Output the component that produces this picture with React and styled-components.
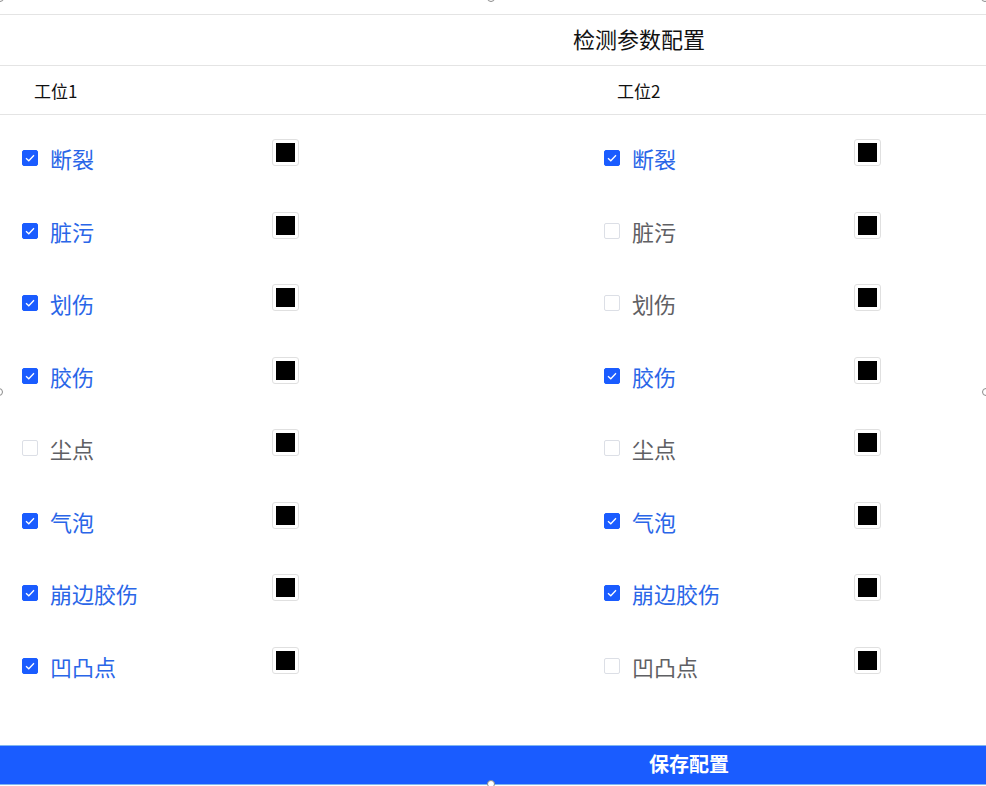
import React, { useState } from "react";
import styled, { createGlobalStyle } from "styled-components";

const GlobalStyle = createGlobalStyle`
  html, body {
    margin: 0;
    padding: 0;
    background: #ffffff;
    font-family: "Noto Sans CJK SC", "Noto Sans", sans-serif;
  }
`;

const DEFECTS = ["断裂", "脏污", "划伤", "胶伤", "尘点", "气泡", "崩边胶伤", "凹凸点"];

const INITIAL = {
  station1: [true, true, true, true, false, true, true, true],
  station2: [true, false, false, true, false, true, true, false],
};

function App() {
  const [checks, setChecks] = useState(INITIAL);

  const toggle = (station, index) => {
    setChecks((prev) => ({
      ...prev,
      [station]: prev[station].map((v, i) => (i === index ? !v : v)),
    }));
  };

  return (
    <Page>
      <GlobalStyle />
      <TopSpace />
      <TitleBar>检测参数配置</TitleBar>
      <StationBar>
        <StationName>工位1</StationName>
        <StationName>工位2</StationName>
      </StationBar>
      <DefectGrid>
        {["station1", "station2"].map((station) => (
          <Column key={station}>
            {DEFECTS.map((name, i) => (
              <DefectRow key={name}>
                <CheckLabel onClick={() => toggle(station, i)}>
                  <CheckBox $checked={checks[station][i]}>
                    {checks[station][i] && (
                      <svg width="10" height="8" viewBox="0 0 10 8">
                        <path
                          d="M1 4.2 L3.8 6.8 L9 1.2"
                          fill="none"
                          stroke="#ffffff"
                          strokeWidth="1.3"
                        />
                      </svg>
                    )}
                  </CheckBox>
                  <DefectName $checked={checks[station][i]}>{name}</DefectName>
                </CheckLabel>
                <ColorPicker>
                  <ColorSwatch />
                </ColorPicker>
              </DefectRow>
            ))}
          </Column>
        ))}
      </DefectGrid>
      <SaveButton>保存配置</SaveButton>

      {/* resize handles of the editor frame */}
      <Handle style={{ left: -4, top: -6 }} />
      <Handle style={{ left: 487, top: -6 }} />
      <Handle style={{ left: 981, top: -6 }} />
      <Handle style={{ left: -5, top: 388 }} />
      <Handle style={{ left: 982, top: 388 }} />
      <Handle style={{ left: 487, top: 780 }} />
    </Page>
  );
}

export default App;

const Page = styled.div`
  position: relative;
  width: 986px;
  height: 786px;
  overflow: hidden;
  background: #ffffff;
`;

const TopSpace = styled.div`
  height: 14px;
  border-bottom: 1px solid #e4e4e4;
`;

const TitleBar = styled.div`
  height: 51px;
  box-sizing: border-box;
  display: flex;
  align-items: center;
  justify-content: center;
  padding: 0 0 4px 292px;
  font-size: 22px;
  color: #111111;
  border-bottom: 1px solid #e4e4e4;
`;

const StationBar = styled.div`
  height: 49px;
  box-sizing: border-box;
  display: grid;
  grid-template-columns: 583px 1fr;
  align-items: center;
  padding-left: 34px;
  border-bottom: 1px solid #e4e4e4;
`;

const StationName = styled.div`
  font-size: 17px;
  color: #111111;
`;

const DefectGrid = styled.div`
  display: grid;
  grid-template-columns: 582px 1fr;
  padding: 7px 0 0 22px;
  height: 630px;
  box-sizing: border-box;
`;

const Column = styled.div`
  display: flex;
  flex-direction: column;
`;

const DefectRow = styled.div`
  height: 72.5px;
  display: flex;
  align-items: center;
`;

const CheckLabel = styled.label`
  width: 250px;
  display: flex;
  align-items: center;
  gap: 12px;
  cursor: pointer;
`;

const CheckBox = styled.span`
  width: 16px;
  height: 16px;
  box-sizing: border-box;
  border-radius: 2px;
  display: flex;
  align-items: center;
  justify-content: center;
  background: ${({ $checked }) => ($checked ? "#1a5cff" : "#ffffff")};
  border: 1px solid ${({ $checked }) => ($checked ? "#1a5cff" : "#dcdfe6")};
`;

const DefectName = styled.span`
  font-size: 22px;
  color: ${({ $checked }) => ($checked ? "#2a66e8" : "#5f6064")};
`;

const ColorPicker = styled.div`
  width: 27px;
  height: 27px;
  box-sizing: border-box;
  border: 1px solid #e0e0e0;
  border-radius: 3px;
  display: flex;
  align-items: center;
  justify-content: center;
  margin-bottom: 11px;
`;

const ColorSwatch = styled.div`
  width: 19px;
  height: 19px;
  background: #000000;
`;

const SaveButton = styled.button`
  display: flex;
  align-items: center;
  justify-content: center;
  width: 100%;
  height: 40px;
  margin: 0;
  padding: 0 0 3px 392px;
  border: none;
  border-top: 1px solid #7fb6f0;
  border-bottom: 1px solid #7fb6f0;
  background: #1a5cff;
  color: #ffffff;
  font-family: "Noto Sans CJK SC", sans-serif;
  font-size: 20px;
  font-weight: 700;
  cursor: pointer;
`;

const Handle = styled.span`
  position: absolute;
  width: 8px;
  height: 8px;
  box-sizing: border-box;
  border: 1px solid #8a8a8a;
  border-radius: 50%;
  background: #ffffff;
`;
